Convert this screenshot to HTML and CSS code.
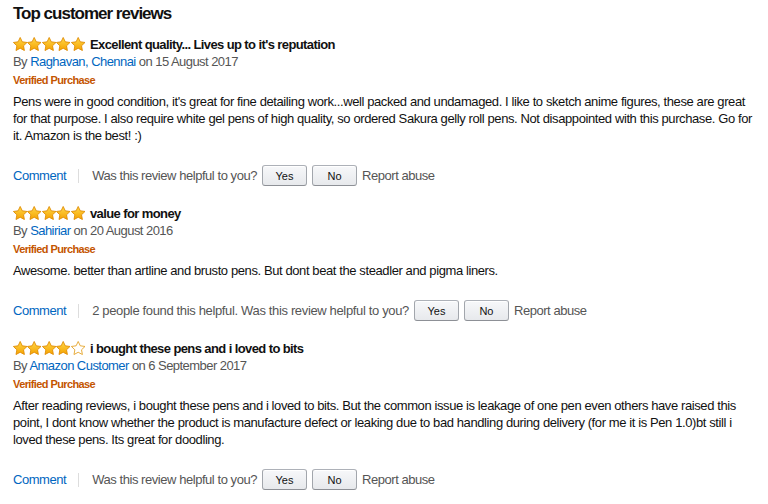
FILE: index.html
```html
<!DOCTYPE html>
<html>
<head>
<meta charset="utf-8">
<link rel="stylesheet" href="styles.css">
</head>
<body>
<svg width="0" height="0" class="defs">
  <defs>
    <linearGradient id="g" x1="0" y1="0" x2="0" y2="1">
      <stop offset="0" stop-color="#ffd84a"/>
      <stop offset="1" stop-color="#f5a200"/>
    </linearGradient>
    <symbol id="star" viewBox="1.2 1.2 21.6 20.8">
      <path d="M12 1.8l3.1 6.5 7.1 1-5.2 5 1.3 7.1L12 18l-6.3 3.4 1.3-7.1-5.2-5 7.1-1z"/>
    </symbol>
  </defs>
</svg>
<div class="reviews">
  <h2 class="heading">Top customer reviews</h2>

  <div class="review">
    <div class="title-row">
      <span class="stars">
        <svg class="star full"><use href="#star"/></svg><svg class="star full"><use href="#star"/></svg><svg class="star full"><use href="#star"/></svg><svg class="star full"><use href="#star"/></svg><svg class="star full"><use href="#star"/></svg>
      </span>
      <span class="title">Excellent quality... Lives up to it's reputation</span>
    </div>
    <div class="by">By <a class="link">Raghavan, Chennai</a> on 15 August 2017</div>
    <div class="verified">Verified Purchase</div>
    <p class="body">Pens were in good condition, it's great for fine detailing work...well packed and undamaged. I like to sketch anime figures, these are great for that purpose. I also require white gel pens of high quality, so ordered Sakura gelly roll pens. Not disappointed with this purchase. Go for it. Amazon is the best! :)</p>
    <div class="actions">
      <a class="link comment">Comment</a>
      <span class="sep"></span>
      <span class="q">Was this review helpful to you?</span>
      <button class="btn">Yes</button>
      <button class="btn">No</button>
      <span class="report">Report abuse</span>
    </div>
  </div>

  <div class="review">
    <div class="title-row">
      <span class="stars">
        <svg class="star full"><use href="#star"/></svg><svg class="star full"><use href="#star"/></svg><svg class="star full"><use href="#star"/></svg><svg class="star full"><use href="#star"/></svg><svg class="star full"><use href="#star"/></svg>
      </span>
      <span class="title">value for money</span>
    </div>
    <div class="by">By <a class="link">Sahiriar</a> on 20 August 2016</div>
    <div class="verified">Verified Purchase</div>
    <p class="body">Awesome. better than artline and brusto pens. But dont beat the steadler and pigma liners.</p>
    <div class="actions">
      <a class="link comment">Comment</a>
      <span class="sep"></span>
      <span class="q wide">2 people found this helpful. Was this review helpful to you?</span>
      <button class="btn">Yes</button>
      <button class="btn">No</button>
      <span class="report">Report abuse</span>
    </div>
  </div>

  <div class="review">
    <div class="title-row">
      <span class="stars">
        <svg class="star full"><use href="#star"/></svg><svg class="star full"><use href="#star"/></svg><svg class="star full"><use href="#star"/></svg><svg class="star full"><use href="#star"/></svg><svg class="star empty"><use href="#star"/></svg>
      </span>
      <span class="title">i bought these pens and i loved to bits</span>
    </div>
    <div class="by">By <a class="link">Amazon Customer</a> on 6 September 2017</div>
    <div class="verified">Verified Purchase</div>
    <p class="body">After reading reviews, i bought these pens and i loved to bits. But the common issue is leakage of one pen even others have raised this point, I dont know whether the product is manufacture defect or leaking due to bad handling during delivery (for me it is Pen 1.0)bt still i loved these pens. Its great for doodling.</p>
    <div class="actions">
      <a class="link comment">Comment</a>
      <span class="sep"></span>
      <span class="q">Was this review helpful to you?</span>
      <button class="btn">Yes</button>
      <button class="btn">No</button>
      <span class="report">Report abuse</span>
    </div>
  </div>
</div>
</body>
</html>
```

FILE: styles.css
```css
html, body {
  margin: 0;
  padding: 0;
  background: #fff;
}
body {
  font-family: "Liberation Sans", Arial, sans-serif;
  color: #111;
  font-size: 13px;
}
.defs {
  position: absolute;
  width: 0;
  height: 0;
}
.reviews {
  padding: 0 8px 0 13px;
}
.heading {
  margin: 0;
  height: 35px;
  line-height: 28px;
  font-size: 17px;
  font-weight: bold;
  letter-spacing: -1px;
  color: #111;
}
.review {
  margin-bottom: 18px;
}
.title-row {
  display: flex;
  align-items: center;
  height: 18px;
}
.stars {
  display: flex;
  margin-right: 5px;
}
.star {
  width: 14.4px;
  height: 14px;
}
.star.full {
  fill: url(#g);
  stroke: #de8a00;
  stroke-width: 1.3px;
}
.star.empty {
  fill: #fff;
  stroke: #e3a020;
  stroke-width: 1.3px;
}
.title {
  font-weight: bold;
  font-size: 13px;
  letter-spacing: -0.6px;
}
.by {
  height: 18px;
  line-height: 18px;
  color: #555;
  letter-spacing: -0.55px;
}
.link {
  color: #0066c0;
  text-decoration: none;
}
.verified {
  height: 18px;
  line-height: 18px;
  font-size: 11px;
  font-weight: bold;
  color: #c45500;
  letter-spacing: -0.6px;
}
.body {
  margin: 4px 0 0;
  line-height: 17px;
  font-size: 13px;
  letter-spacing: -0.4px;
  color: #111;
}
.actions {
  display: flex;
  align-items: center;
  height: 21px;
  margin-top: 21px;
  color: #555;
  letter-spacing: -0.45px;
}
.comment {
  margin-right: 12px;
}
.sep {
  width: 1px;
  height: 14px;
  background: #ddd;
  margin-right: 13px;
}
.q {
  margin-right: 5px;
}
.q.wide {
  letter-spacing: -0.35px;
}
.btn {
  width: 45px;
  height: 21px;
  margin: 0 5px 0 0;
  padding: 0;
  font-family: "Liberation Sans", Arial, sans-serif;
  font-size: 11px;
  color: #111;
  background: linear-gradient(#f7f8fa, #e7e9ec);
  border: 1px solid #adb1b8;
  border-color: #adb1b8 #a2a6ac #8d9096;
  border-radius: 3px;
  box-shadow: inset 0 1px 0 #fff;
}
.report {
  color: #555;
}
```
